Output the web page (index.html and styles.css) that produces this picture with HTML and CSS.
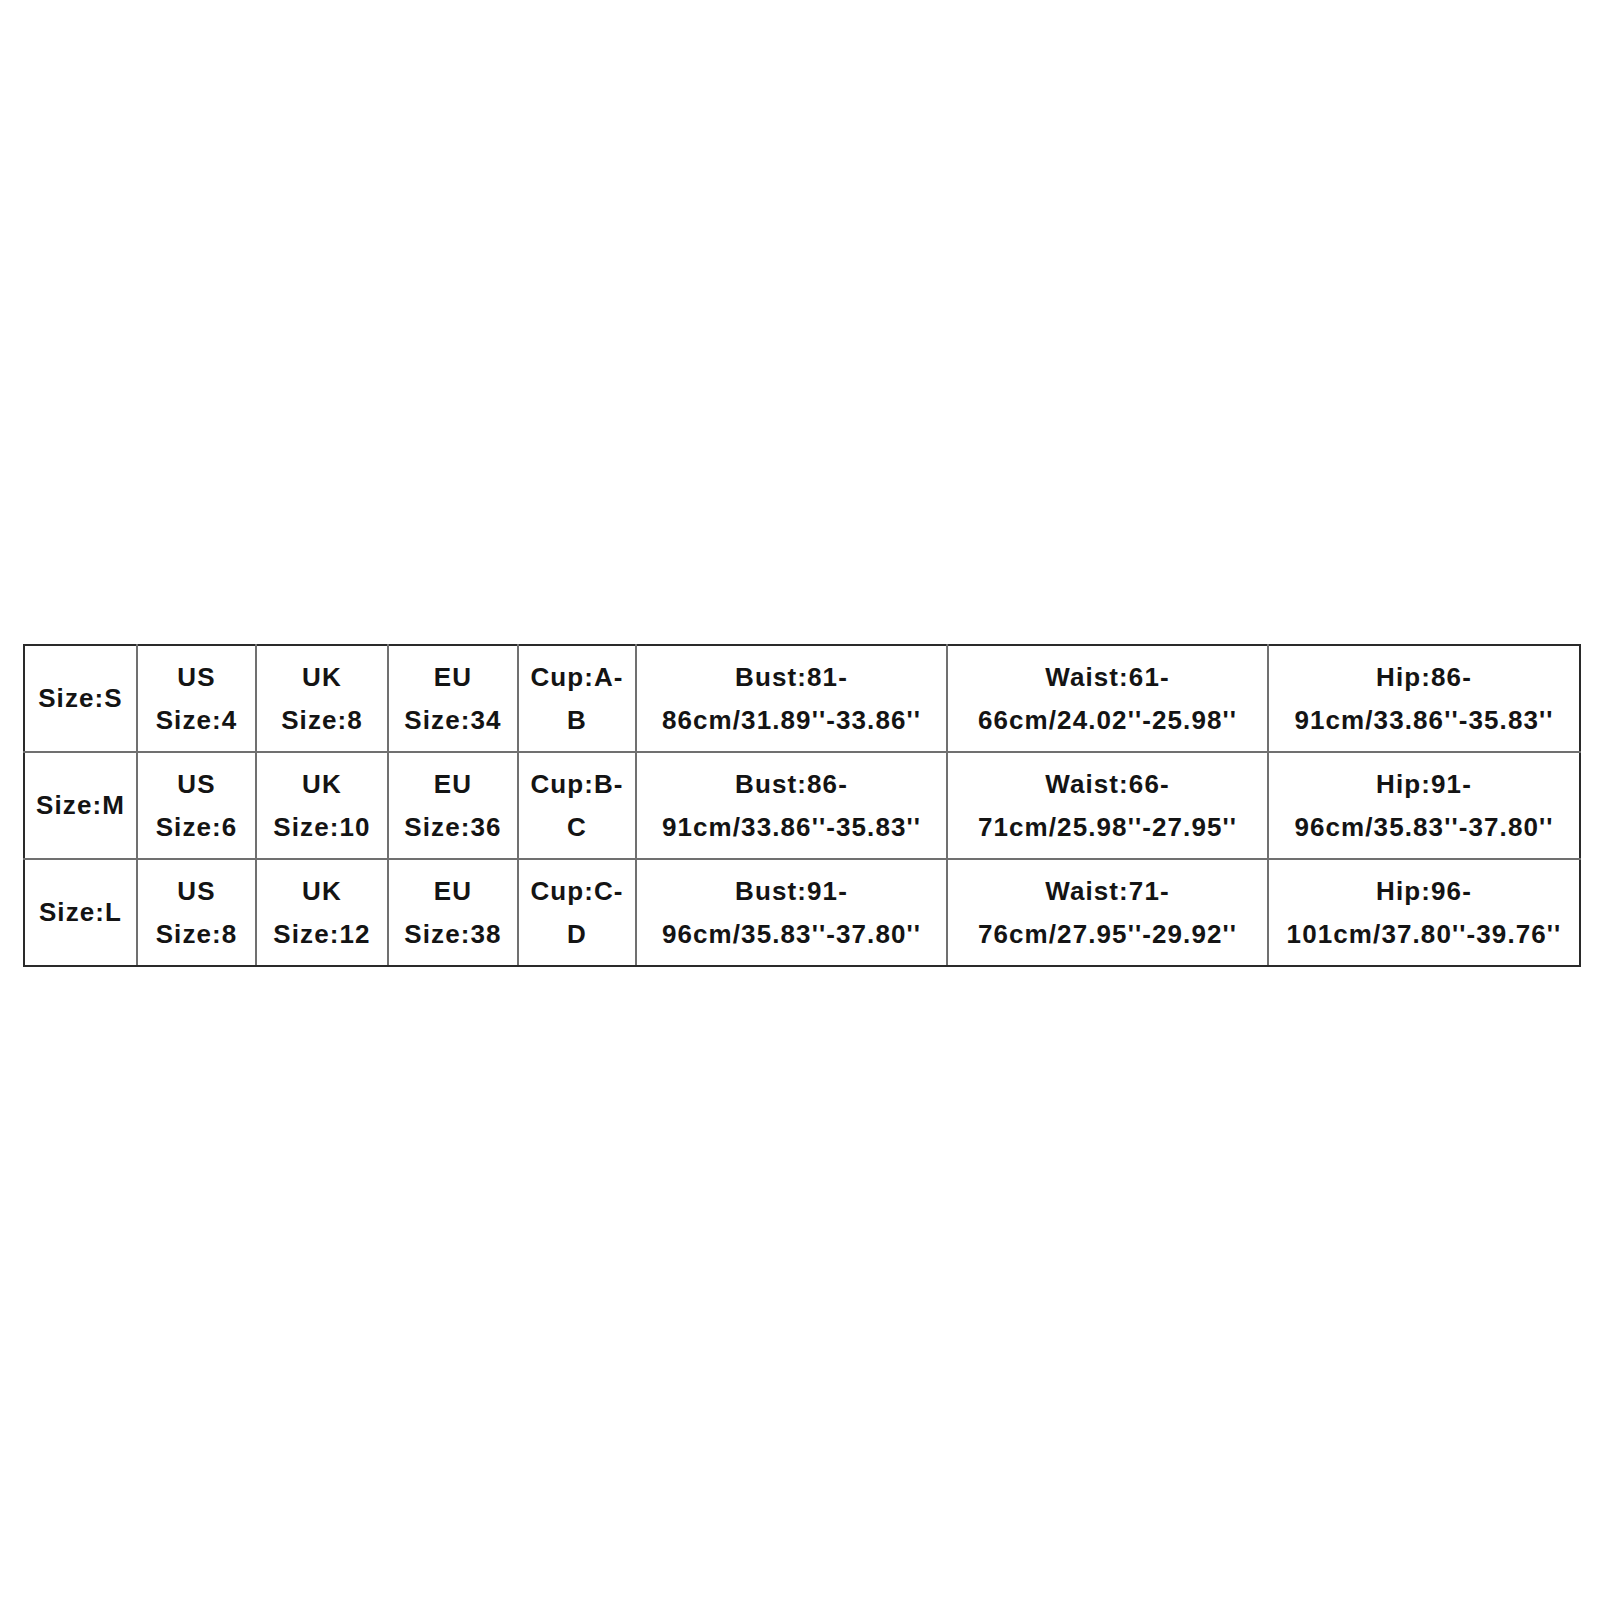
FILE: index.html
```html
<!DOCTYPE html>
<html>
<head>
<meta charset="utf-8">
<link rel="stylesheet" href="styles.css">
</head>
<body>
<div class="page">
<table class="size-table">
<colgroup>
<col class="c1"><col class="c2"><col class="c3"><col class="c4"><col class="c5"><col class="c6"><col class="c7"><col class="c8">
</colgroup>
<tr>
<td>Size:S</td>
<td>US<br>Size:4</td>
<td>UK<br>Size:8</td>
<td>EU<br>Size:34</td>
<td>Cup:A-<br>B</td>
<td>Bust:81-<br>86cm/31.89''-33.86''</td>
<td>Waist:61-<br>66cm/24.02''-25.98''</td>
<td>Hip:86-<br>91cm/33.86''-35.83''</td>
</tr>
<tr>
<td>Size:M</td>
<td>US<br>Size:6</td>
<td>UK<br>Size:10</td>
<td>EU<br>Size:36</td>
<td>Cup:B-<br>C</td>
<td>Bust:86-<br>91cm/33.86''-35.83''</td>
<td>Waist:66-<br>71cm/25.98''-27.95''</td>
<td>Hip:91-<br>96cm/35.83''-37.80''</td>
</tr>
<tr>
<td>Size:L</td>
<td>US<br>Size:8</td>
<td>UK<br>Size:12</td>
<td>EU<br>Size:38</td>
<td>Cup:C-<br>D</td>
<td>Bust:91-<br>96cm/35.83''-37.80''</td>
<td>Waist:71-<br>76cm/27.95''-29.92''</td>
<td>Hip:96-<br>101cm/37.80''-39.76''</td>
</tr>
</table>
</div>
</body>
</html>
```
FILE: styles.css
```css
html, body {
  margin: 0;
  padding: 0;
  background: #ffffff;
}
.page {
  width: 1600px;
  height: 1600px;
  padding: 644px 0 0 23px;
  box-sizing: border-box;
}
.size-table {
  border-collapse: collapse;
  table-layout: fixed;
  width: 1558px;
  border: 2px solid #2a2a2a;
  font-family: "Liberation Sans", Arial, sans-serif;
  font-weight: bold;
  font-size: 26px;
  letter-spacing: 1.1px;
  color: #141414;
}
.size-table td {
  border: 2px solid #707070;
  text-align: center;
  vertical-align: middle;
  height: 105px;
  padding: 0;
  line-height: 43px;
  white-space: nowrap;
}
.size-table tr:first-child td { border-top-color: #2a2a2a; }
.size-table tr:last-child td { border-bottom-color: #2a2a2a; }
.size-table td:first-child { border-left-color: #2a2a2a; }
.size-table td:last-child { border-right-color: #2a2a2a; }
.c1 { width: 113px; }
.c2 { width: 119px; }
.c3 { width: 132px; }
.c4 { width: 130px; }
.c5 { width: 118px; }
.c6 { width: 311px; }
.c7 { width: 321px; }
.c8 { width: 312px; }
```
